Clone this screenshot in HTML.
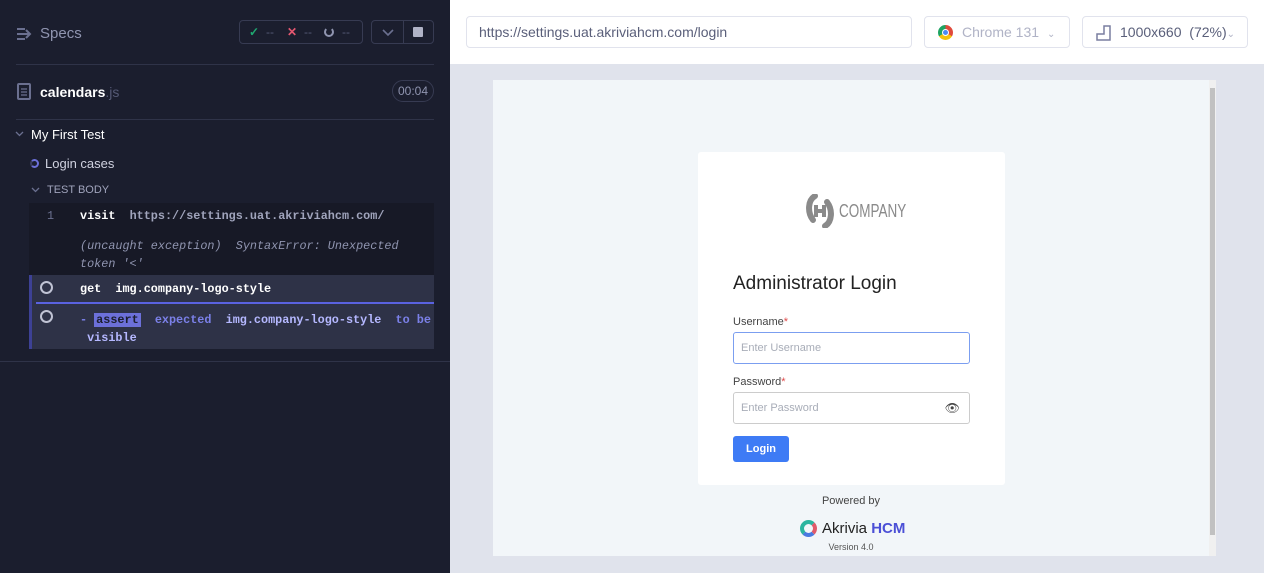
<!DOCTYPE html>
<html><head><meta charset="utf-8"><style>
*{box-sizing:border-box;margin:0;padding:0}
body{width:1264px;height:573px;overflow:hidden;font-family:"Liberation Sans",sans-serif;background:#e0e3ec;position:relative}
.l{position:absolute;left:0;top:0;width:450px;height:573px;background:#1b1e2e;color:#d0d2e0}
.a{position:absolute}
.mono{font-family:"Liberation Mono",monospace;font-size:11.8px;font-weight:bold;white-space:nowrap}
.r{position:absolute;left:450px;top:0;width:814px;height:64px;background:#fff}
.box{position:absolute;border:1px solid #e1e3ed;border-radius:4px;background:#fff;font-size:14px;color:#5a5f7a;padding-left:12px;line-height:30px}
</style></head><body>
<div class="l">
 <svg class="a" style="left:16px;top:27px" width="16" height="14"><g stroke="#6b7090" stroke-width="2" fill="none"><path d="M1 2h8M1 7h12M1 12h8M10 3l4 4-4 4"/></g></svg>
 <div class="a" style="left:40px;top:25px;font-size:15px;color:#9095b0">Specs</div>
 <div class="a" style="left:239px;top:20px;width:124px;height:24px;border:1px solid #373b52;border-radius:4px;font-size:12px;color:#555a75;line-height:22px">
  <span style="position:absolute;left:9px;color:#1fa971;font-weight:bold">✓</span><span style="position:absolute;left:26px">--</span>
  <span style="position:absolute;left:47px;color:#e45770;font-weight:bold">✕</span><span style="position:absolute;left:64px">--</span>
  <span style="position:absolute;left:84px;top:6px;width:10px;height:10px;border:2px solid #9095b0;border-radius:50%;border-top-color:transparent"></span><span style="position:absolute;left:102px">--</span>
 </div>
 <div class="a" style="left:371px;top:20px;width:63px;height:24px;border:1px solid #373b52;border-radius:4px">
  <div class="a" style="left:31px;top:0;width:1px;height:22px;background:#373b52"></div>
  <svg class="a" style="left:10px;top:8px" width="12" height="8"><path d="M1 1l5 5 5-5" stroke="#6b7090" stroke-width="1.6" fill="none"/></svg>
  <div class="a" style="left:41px;top:6px;width:10px;height:10px;background:#b0b3c6;border-radius:1px"></div>
 </div>
 <div class="a" style="left:16px;top:64px;width:418px;height:1px;background:#2f3348"></div>
 <svg class="a" style="left:17px;top:83px" width="14" height="17"><rect x="1" y="1" width="12" height="15" rx="1" fill="none" stroke="#6b7090" stroke-width="2"/><path d="M4 6h6M4 9h6M4 12h6" stroke="#6b7090" stroke-width="1.3"/></svg>
 <div class="a" style="left:40px;top:84px;font-size:14px;font-weight:bold;color:#fff">calendars<span style="font-weight:normal;color:#555a75">.js</span></div>
 <div class="a" style="left:392px;top:80px;width:42px;height:22px;border:1px solid #373b52;border-radius:11px;font-size:12px;color:#9095b0;text-align:center;line-height:20px">00:04</div>
 <div class="a" style="left:16px;top:119px;width:418px;height:1px;background:#2f3348"></div>
 <svg class="a" style="left:15px;top:131px" width="9" height="6"><path d="M1 1l3.5 3.5L8 1" stroke="#6b7090" stroke-width="1.3" fill="none"/></svg>
 <div class="a" style="left:31px;top:127px;font-size:13px;color:#fff">My First Test</div>
 <div class="a" style="left:30px;top:159px;width:9px;height:9px;border:2px solid #6c70d9;border-radius:50%;border-left-color:#3a3d60"></div>
 <div class="a" style="left:45px;top:156px;font-size:13px;color:#d0d2e0">Login cases</div>
 <svg class="a" style="left:31px;top:187px" width="9" height="6"><path d="M1 1l3.5 3.5L8 1" stroke="#6b7090" stroke-width="1.3" fill="none"/></svg>
 <div class="a" style="left:47px;top:184px;font-size:11px;color:#a0a4bc">TEST BODY</div>
 <div class="a" style="left:29px;top:203px;width:405px;height:72px;background:#171926"></div>
 <div class="a mono" style="left:47px;top:209px;color:#6b7090;font-weight:normal">1</div>
 <div class="a mono" style="left:80px;top:209px;color:#fff">visit <span style="color:#a0a4bc">&nbsp;https://settings.uat.akriviahcm.com/</span></div>
 <div class="a mono" style="left:80px;top:237px;color:#9095b0;font-style:italic;font-weight:normal;line-height:18px">(uncaught exception)&nbsp; SyntaxError: Unexpected<br>token '&lt;'</div>
 <div class="a" style="left:29px;top:275px;width:405px;height:74px;background:#2e3247"></div>
 <div class="a" style="left:29px;top:275px;width:3px;height:74px;background:#3d4195"></div>
 <div class="a" style="left:36px;top:302px;width:398px;height:2px;background:#5a62e0"></div>
 <div class="a" style="left:40px;top:281px;width:13px;height:13px;border:2px solid #c0c3d4;border-radius:50%"></div>
 <div class="a" style="left:40px;top:310px;width:13px;height:13px;border:2px solid #c0c3d4;border-radius:50%"></div>
 <div class="a mono" style="left:80px;top:282px;color:#fff">get &nbsp;img.company-logo-style</div>
 <div class="a mono" style="left:80px;top:311px;color:#7b80e8;line-height:18px">- <span style="background:#6c70d9;color:#1b1e2e;padding:0 2px">assert</span> &nbsp;expected &nbsp;<span style="color:#b5b8ff">img.company-logo-style</span> &nbsp;to be<br>&nbsp;<span style="color:#b5b8ff">visible</span></div>
 <div class="a" style="left:0;top:361px;width:450px;height:1px;background:#2f3348"></div>
</div>
<div class="r">
 <div class="box" style="left:16px;top:16px;width:446px;height:32px">https://settings.uat.akriviahcm.com/login</div>
 <div class="box" style="left:474px;top:16px;width:146px;height:32px;color:#b0b3c6;padding-left:37px">Chrome 131 <span style="font-size:10px;margin-left:4px">⌄</span>
  <div class="a" style="left:13px;top:8px;width:15px;height:15px;border-radius:50%;background:conic-gradient(#e04a3c 0 120deg,#f4c20d 120deg 240deg,#1fa463 240deg);"><div style="position:absolute;left:4px;top:4px;width:7px;height:7px;border-radius:50%;background:#4a8af4;border:1px solid #fff"></div></div>
 </div>
 <div class="box" style="left:632px;top:16px;width:166px;height:32px;padding-left:37px;color:#5a5f7a">1000x660 &nbsp;(72%)<span style="font-size:10px;color:#b0b3c6">⌄</span>
  <svg class="a" style="left:13px;top:8px" width="16" height="16"><path d="M1 15V9h7V1h6v14z" fill="none" stroke="#7a7fa0" stroke-width="1.5"/></svg>
 </div>
</div>
<div class="a" style="left:493px;top:80px;width:723px;height:476px;background:#f2f6f9">
 <div class="a" style="left:716px;top:0;width:7px;height:476px;background:#f0f0f0"></div>
 <div class="a" style="left:717px;top:8px;width:5px;height:447px;background:#c1c1c1"></div>
 <div class="a" style="left:205px;top:72px;width:307px;height:333px;background:#fff;border-radius:3px">
  <svg class="a" style="left:107px;top:42px" width="30" height="34"><path d="M10 2C3 6 2 18 8 26M20 32c7-4 8-16 2-24" stroke="#8a8a8a" stroke-width="6" fill="none" stroke-linecap="round"/><path d="M11 11v12M19 11v12M11 17h8" stroke="#8a8a8a" stroke-width="4"/></svg>
  <div class="a" style="left:141px;top:49px;font-size:18px;color:#8a8a8a;transform:scaleX(.75);transform-origin:left">COMPANY</div>
  <div class="a" style="left:35px;top:121px;font-size:19px;color:#222">Administrator Login</div>
  <div class="a" style="left:35px;top:164px;font-size:11px;color:#444">Username<span style="color:#e04a4a">*</span></div>
  <div class="a" style="left:35px;top:180px;width:237px;height:32px;border:1px solid #7b9ef0;border-radius:3px;font-size:11px;color:#a8adb8;padding-left:7px;line-height:30px">Enter Username</div>
  <div class="a" style="left:35px;top:224px;font-size:11px;color:#444">Password<span style="color:#e04a4a">*</span></div>
  <div class="a" style="left:35px;top:240px;width:237px;height:32px;border:1px solid #ccc;border-radius:3px;font-size:11px;color:#a8adb8;padding-left:7px;line-height:30px">Enter Password<span style="position:absolute;right:9px;color:#444;font-size:12px">👁</span></div>
  <div class="a" style="left:35px;top:284px;width:56px;height:26px;background:#3e7bf5;border-radius:3px;color:#fff;font-size:11px;font-weight:bold;text-align:center;line-height:26px">Login</div>
 </div>
 <div class="a" style="left:0;top:415px;width:716px;text-align:center;font-size:11px;color:#444">Powered by</div>
 <div class="a" style="left:307px;top:440px;width:17px;height:17px;border-radius:50%;border:4px solid #2cb5a0;border-right-color:#e05a6a;border-bottom-color:#4a7ae0"></div>
 <div class="a" style="left:329px;top:440px;font-size:15px;color:#222">Akrivia <b style="color:#4b4fd6">HCM</b></div>
 <div class="a" style="left:0;top:462px;width:716px;text-align:center;font-size:9px;color:#555">Version 4.0</div>
</div>
</body></html>
